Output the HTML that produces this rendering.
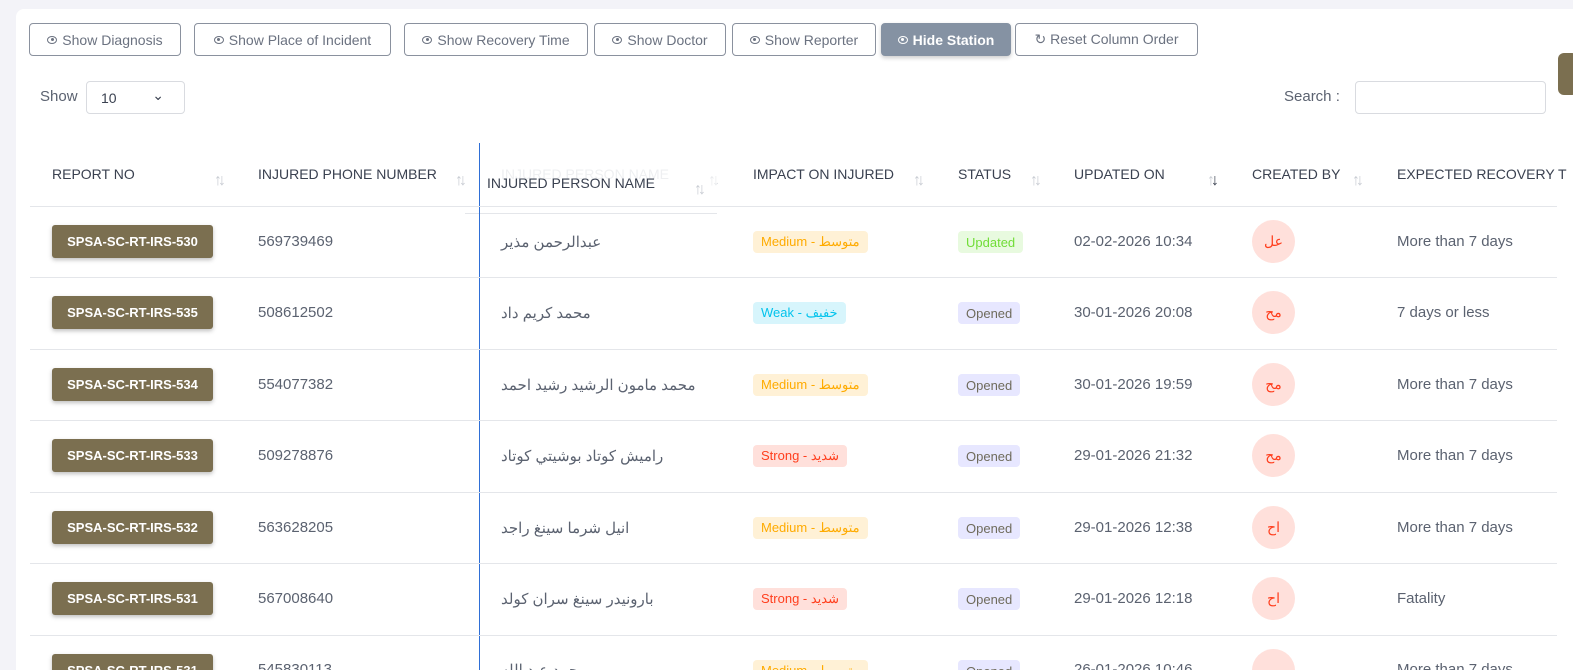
<!DOCTYPE html>
<html style="overflow:hidden;width:1573px;height:670px"><head><meta charset="utf-8"><style>
*{margin:0;padding:0;box-sizing:border-box}
html,body{overflow:hidden}
body{width:1573px;height:670px;background:#f3f3f8;font-family:"Liberation Sans","Noto Sans CJK SC",sans-serif;color:#5b6270;position:relative}
.card{position:absolute;left:16px;top:9px;width:1557px;height:661px;background:#fff;border-radius:8px 0 0 0}
.a{position:absolute;white-space:nowrap}
.btn{position:absolute;top:23px;height:33px;border:1px solid #8a919e;border-radius:4px;font-size:14px;color:#6b7280;display:flex;align-items:center;justify-content:center;gap:5px;background:#fff}
.btn.dark{background:#8592a3;border-color:#8592a3;color:#fff;box-shadow:0 2px 4px rgba(0,0,0,.2)}
.eye{width:10px;height:8px;border:1px solid currentColor;border-radius:50%;position:relative}
.eye:after{content:"";position:absolute;left:2.5px;top:1.5px;width:3px;height:3px;border-radius:50%;background:currentColor}
.th{position:absolute;top:166px;font-size:14px;color:#3a4150}
.sort{position:absolute;top:172px;font-size:16px;color:#c8ccd3;letter-spacing:-4px}
.line{position:absolute;left:30px;width:1527px;height:1px;background:#e4e6ea}
.rep{position:absolute;left:52px;width:161px;height:33px;background:#7b6f50;color:#fff;font-size:13px;font-weight:bold;border-radius:3px;display:flex;align-items:center;justify-content:center;box-shadow:0 2px 4px rgba(0,0,0,.25)}
.t{position:absolute;font-size:15px;color:#5b6270}
.bd{position:absolute;height:22px;border-radius:4px;font-size:13px;padding:0 8px;display:flex;align-items:center}
.med{background:#fff1d6;color:#ffab00}.weak{background:#d7f5fc;color:#03c3ec}.str{background:#ffe0db;color:#ff3e1d}
.op{background:#e7e7ff;color:#6f6b5c}.up{background:#e8fadf;color:#71dd37}
.av{position:absolute;left:1252px;width:43px;height:43px;border-radius:50%;background:#ffe0db;color:#ff3e1d;font-size:14px;display:flex;align-items:center;justify-content:center}
</style></head><body>
<div class="card"></div>
<div class="btn" style="left:29px;width:152px"><span class="eye"></span>Show Diagnosis</div>
<div class="btn" style="left:194px;width:197px"><span class="eye"></span>Show Place of Incident</div>
<div class="btn" style="left:404px;width:184px"><span class="eye"></span>Show Recovery Time</div>
<div class="btn" style="left:594px;width:132px"><span class="eye"></span>Show Doctor</div>
<div class="btn" style="left:732px;width:144px"><span class="eye"></span>Show Reporter</div>
<div class="btn dark" style="left:881px;width:130px;font-weight:bold"><span class="eye"></span>Hide Station</div>
<div class="btn" style="left:1015px;width:183px">↻ Reset Column Order</div>
<div style="position:absolute;left:1558px;top:53px;width:20px;height:42px;background:#7b6f50;border-radius:6px"></div>
<div class="a" style="left:40px;top:88px;font-size:15px;color:#5b6270">Show</div>
<div style="position:absolute;left:86px;top:81px;width:99px;height:33px;border:1px solid #d9dbe0;border-radius:4px;font-size:14px;padding:8px 14px;color:#3a4150">10<span style="position:absolute;right:20px;top:5px;font-size:14px">⌄</span></div>
<div class="a" style="left:1284px;top:88px;font-size:15px">Search :</div>
<div style="position:absolute;left:1355px;top:81px;width:191px;height:33px;border:1px solid #d9dbe0;border-radius:4px"></div>

<div class="th" style="left:52px">REPORT NO</div><div class="sort" style="left:214px">↑↓</div>
<div class="th" style="left:258px">INJURED PHONE NUMBER</div><div class="sort" style="left:455px">↑↓</div>
<div class="th" style="left:501px;color:#d4d7dc">INJURED PERSON NAME</div><div class="sort" style="left:708px">↑↓</div>
<div class="th" style="left:753px">IMPACT ON INJURED</div><div class="sort" style="left:913px">↑↓</div>
<div class="th" style="left:958px">STATUS</div><div class="sort" style="left:1030px">↑↓</div>
<div class="th" style="left:1074px">UPDATED ON</div><div class="sort" style="left:1207px;color:#c8ccd3">↑<span style="color:#3a4150">↓</span></div>
<div class="th" style="left:1252px">CREATED BY</div><div class="sort" style="left:1352px">↑↓</div>
<div class="th" style="left:1397px">EXPECTED RECOVERY T</div>
<div style="position:absolute;left:465px;top:145px;width:252px;height:69px;background:rgba(255,255,255,.6);border-bottom:1px solid #e4e6ea"></div>
<div class="th" style="left:487px;top:175px">INJURED PERSON NAME</div><div class="sort" style="left:694px;top:181px">↑↓</div>
<div style="position:absolute;left:479px;top:143px;width:1px;height:530px;background:#2f6fd6"></div>

<div class="line" style="top:206px"></div><div class="line" style="top:277px"></div><div class="line" style="top:349px"></div><div class="line" style="top:420px"></div><div class="line" style="top:492px"></div><div class="line" style="top:563px"></div><div class="line" style="top:635px"></div>

<div class="rep" style="top:225px">SPSA-SC-RT-IRS-530</div><div class="t" style="left:258px;top:233px">569739469</div><div class="t" style="left:501px;top:233px">عبدالرحمن مذير</div><div class="bd med" style="left:753px;top:231px">Medium - متوسط</div><div class="bd up" style="left:958px;top:231px">Updated</div><div class="t" style="left:1074px;top:233px">02-02-2026 10:34</div><div class="av" style="top:220px">عل</div><div class="t" style="left:1397px;top:233px">More than 7 days</div>

<div class="rep" style="top:296px">SPSA-SC-RT-IRS-535</div><div class="t" style="left:258px;top:304px">508612502</div><div class="t" style="left:501px;top:304px">محمد كريم داد</div><div class="bd weak" style="left:753px;top:302px">Weak - خفيف</div><div class="bd op" style="left:958px;top:302px">Opened</div><div class="t" style="left:1074px;top:304px">30-01-2026 20:08</div><div class="av" style="top:291px">مح</div><div class="t" style="left:1397px;top:304px">7 days or less</div>

<div class="rep" style="top:368px">SPSA-SC-RT-IRS-534</div><div class="t" style="left:258px;top:376px">554077382</div><div class="t" style="left:501px;top:376px">محمد مامون الرشيد رشيد احمد</div><div class="bd med" style="left:753px;top:374px">Medium - متوسط</div><div class="bd op" style="left:958px;top:374px">Opened</div><div class="t" style="left:1074px;top:376px">30-01-2026 19:59</div><div class="av" style="top:363px">مح</div><div class="t" style="left:1397px;top:376px">More than 7 days</div>

<div class="rep" style="top:439px">SPSA-SC-RT-IRS-533</div><div class="t" style="left:258px;top:447px">509278876</div><div class="t" style="left:501px;top:447px">راميش كوتاد بوشيتي كوتاد</div><div class="bd str" style="left:753px;top:445px">Strong - شديد</div><div class="bd op" style="left:958px;top:445px">Opened</div><div class="t" style="left:1074px;top:447px">29-01-2026 21:32</div><div class="av" style="top:434px">مح</div><div class="t" style="left:1397px;top:447px">More than 7 days</div>

<div class="rep" style="top:511px">SPSA-SC-RT-IRS-532</div><div class="t" style="left:258px;top:519px">563628205</div><div class="t" style="left:501px;top:519px">انيل شرما سينغ راجد</div><div class="bd med" style="left:753px;top:517px">Medium - متوسط</div><div class="bd op" style="left:958px;top:517px">Opened</div><div class="t" style="left:1074px;top:519px">29-01-2026 12:38</div><div class="av" style="top:506px">اح</div><div class="t" style="left:1397px;top:519px">More than 7 days</div>

<div class="rep" style="top:582px">SPSA-SC-RT-IRS-531</div><div class="t" style="left:258px;top:590px">567008640</div><div class="t" style="left:501px;top:590px">بارونيدر سينغ سران كولد</div><div class="bd str" style="left:753px;top:588px">Strong - شديد</div><div class="bd op" style="left:958px;top:588px">Opened</div><div class="t" style="left:1074px;top:590px">29-01-2026 12:18</div><div class="av" style="top:577px">اح</div><div class="t" style="left:1397px;top:590px">Fatality</div>

<div class="rep" style="top:654px">SPSA-SC-RT-IRS-531</div><div class="t" style="left:258px;top:661px">545830113</div><div class="t" style="left:501px;top:661px">محمد عبد الله</div><div class="bd med" style="left:753px;top:660px">Medium - متوسط</div><div class="bd op" style="left:958px;top:660px">Opened</div><div class="t" style="left:1074px;top:661px">26-01-2026 10:46</div><div class="av" style="top:649px"></div><div class="t" style="left:1397px;top:661px">More than 7 days</div>
</body></html>
